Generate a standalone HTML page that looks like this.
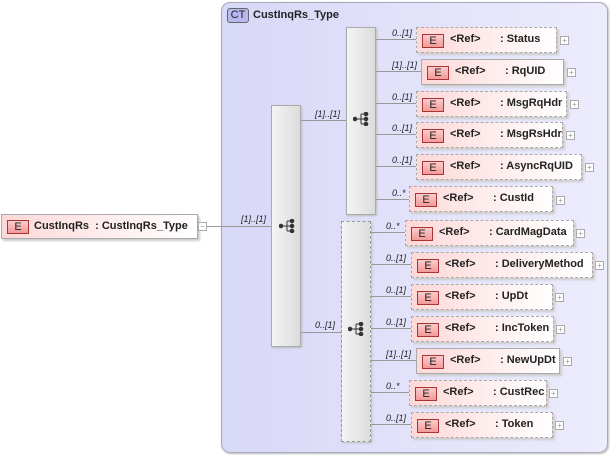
<!DOCTYPE html>
<html><head><meta charset="utf-8"><style>
*{margin:0;padding:0;box-sizing:border-box}
body{width:610px;height:455px;background:#fff;position:relative;overflow:hidden;font-family:"Liberation Sans",Arial,sans-serif;font-size:11px;font-weight:bold;color:#222}
.a{position:absolute}
.ct{left:221px;top:2px;width:387px;height:451px;border:1px solid #a8a8b8;border-radius:9px;background:linear-gradient(90deg,#d8d8f8,#ececfd);box-shadow:1px 1px 2px #bbb}
.ctb{left:227px;top:8px;width:22px;height:15px;border:1px solid #666;border-radius:3px;background:#b8b8f0;font-weight:normal;font-size:11px;text-align:center;line-height:13px;color:#222}
.seq{border:1px solid #aaa;background:linear-gradient(90deg,#f4f4f4,#dcdcdc);box-shadow:1px 1px 2px #bbb}
.seq.d{border:1px dashed #999}
.el{height:26px;border:1px solid #aaa;background:linear-gradient(90deg,#fdd8d8,#fff);box-shadow:2px 2px 2px #ccc}
.el.d{border:1px dashed #aaa}
.eb{position:absolute;left:5px;top:6px;width:22px;height:14px;border:1px solid #a33;background:linear-gradient(#fcc,#f29a9a);font-weight:normal;text-align:center;line-height:12px;font-size:11px;color:#222}
.r{position:absolute;left:33px;top:5px}
.n{position:absolute;left:83px;top:5px;white-space:nowrap}
.pl{width:9px;height:9px;border:1px solid #aaa;background:#fff;font-size:8px;line-height:7px;text-align:center;color:#999;font-weight:normal}
.h{height:1px;background:#999}
.lb{font-style:italic;font-weight:normal;font-size:9px;color:#222}
</style></head><body>
<div class="a el" style="left:1px;top:214px;width:197px;height:25px;border-color:#aaa"><div class="eb" style="top:5px">E</div><div class="r" style="left:32px;top:5px">CustInqRs&nbsp; : CustInqRs_Type</div></div>
<div class="a pl" style="left:198px;top:222px">−</div>
<div class="a h" style="left:207px;top:226px;width:64px"></div>
<div class="a ct"></div>
<div class="a ctb">CT</div>
<div class="a" style="left:253px;top:9px;font-size:11px">CustInqRs_Type</div>
<div class="a h" style="left:221px;top:226px;width:50px"></div>
<div class="a lb" style="left:241px;top:214px">[1]..[1]</div>

<div class="a seq" style="left:271px;top:105px;width:30px;height:242px"></div>
<svg class="a" style="left:279px;top:219px" width="16" height="14"><g fill="#333" stroke="#333"><circle cx="2" cy="7" r="1.8"/><line x1="2" y1="7" x2="8" y2="7"/><line x1="8" y1="2" x2="8" y2="12"/><line x1="8" y1="2" x2="13" y2="2"/><line x1="8" y1="7" x2="13" y2="7"/><line x1="8" y1="12" x2="13" y2="12"/><circle cx="13" cy="2" r="1.8"/><circle cx="13" cy="7" r="1.8"/><circle cx="13" cy="12" r="1.8"/></g></svg>

<div class="a h" style="left:301px;top:120px;width:45px"></div>
<div class="a lb" style="left:315px;top:109px">[1]..[1]</div>
<div class="a h" style="left:301px;top:332px;width:41px"></div>
<div class="a lb" style="left:315px;top:320px">0..[1]</div>

<div class="a seq" style="left:346px;top:27px;width:30px;height:188px"></div>
<svg class="a" style="left:353px;top:112px" width="16" height="14"><g fill="#333" stroke="#333"><circle cx="2" cy="7" r="1.8"/><line x1="2" y1="7" x2="8" y2="7"/><line x1="8" y1="2" x2="8" y2="12"/><line x1="8" y1="2" x2="13" y2="2"/><line x1="8" y1="7" x2="13" y2="7"/><line x1="8" y1="12" x2="13" y2="12"/><circle cx="13" cy="2" r="1.8"/><circle cx="13" cy="7" r="1.8"/><circle cx="13" cy="12" r="1.8"/></g></svg>

<div class="a seq d" style="left:341px;top:221px;width:30px;height:221px"></div>
<svg class="a" style="left:348px;top:322px" width="16" height="14"><g fill="#333" stroke="#333"><circle cx="2" cy="7" r="1.8"/><line x1="2" y1="7" x2="8" y2="7"/><line x1="8" y1="2" x2="8" y2="12"/><line x1="8" y1="2" x2="13" y2="2"/><line x1="8" y1="7" x2="13" y2="7"/><line x1="8" y1="12" x2="13" y2="12"/><circle cx="13" cy="2" r="1.8"/><circle cx="13" cy="7" r="1.8"/><circle cx="13" cy="12" r="1.8"/></g></svg>

<div class="a h" style="left:376px;top:39px;width:40px"></div><div class="a lb" style="left:392px;top:28px">0..[1]</div>
<div class="a el d" style="left:416px;top:27px;width:141px"><div class="eb">E</div><div class="r">&lt;Ref&gt;</div><div class="n">: Status</div></div><div class="a pl" style="left:560px;top:36px">+</div>

<div class="a h" style="left:376px;top:71px;width:45px"></div><div class="a lb" style="left:392px;top:60px">[1]..[1]</div>
<div class="a el" style="left:421px;top:59px;width:143px"><div class="eb">E</div><div class="r">&lt;Ref&gt;</div><div class="n">: RqUID</div></div><div class="a pl" style="left:567px;top:68px">+</div>

<div class="a h" style="left:376px;top:103px;width:40px"></div><div class="a lb" style="left:392px;top:92px">0..[1]</div>
<div class="a el d" style="left:416px;top:91px;width:151px"><div class="eb">E</div><div class="r">&lt;Ref&gt;</div><div class="n">: MsgRqHdr</div></div><div class="a pl" style="left:570px;top:100px">+</div>

<div class="a h" style="left:376px;top:134px;width:40px"></div><div class="a lb" style="left:392px;top:123px">0..[1]</div>
<div class="a el d" style="left:416px;top:122px;width:147px"><div class="eb">E</div><div class="r">&lt;Ref&gt;</div><div class="n">: MsgRsHdr</div></div><div class="a pl" style="left:566px;top:131px">+</div>

<div class="a h" style="left:376px;top:166px;width:40px"></div><div class="a lb" style="left:392px;top:155px">0..[1]</div>
<div class="a el d" style="left:416px;top:154px;width:166px"><div class="eb">E</div><div class="r">&lt;Ref&gt;</div><div class="n">: AsyncRqUID</div></div><div class="a pl" style="left:585px;top:163px">+</div>

<div class="a h" style="left:376px;top:199px;width:33px"></div><div class="a lb" style="left:392px;top:188px">0..*</div>
<div class="a el d" style="left:409px;top:186px;width:144px"><div class="eb">E</div><div class="r">&lt;Ref&gt;</div><div class="n">: CustId</div></div><div class="a pl" style="left:556px;top:196px">+</div>

<div class="a h" style="left:371px;top:232px;width:34px"></div><div class="a lb" style="left:386px;top:221px">0..*</div>
<div class="a el d" style="left:405px;top:220px;width:169px"><div class="eb">E</div><div class="r">&lt;Ref&gt;</div><div class="n">: CardMagData</div></div><div class="a pl" style="left:576px;top:229px">+</div>

<div class="a h" style="left:371px;top:264px;width:40px"></div><div class="a lb" style="left:386px;top:253px">0..[1]</div>
<div class="a el d" style="left:411px;top:252px;width:182px"><div class="eb">E</div><div class="r">&lt;Ref&gt;</div><div class="n">: DeliveryMethod</div></div><div class="a pl" style="left:595px;top:261px">+</div>

<div class="a h" style="left:371px;top:296px;width:40px"></div><div class="a lb" style="left:386px;top:285px">0..[1]</div>
<div class="a el d" style="left:411px;top:284px;width:142px"><div class="eb">E</div><div class="r">&lt;Ref&gt;</div><div class="n">: UpDt</div></div><div class="a pl" style="left:555px;top:293px">+</div>

<div class="a h" style="left:371px;top:328px;width:40px"></div><div class="a lb" style="left:386px;top:317px">0..[1]</div>
<div class="a el d" style="left:411px;top:316px;width:143px"><div class="eb">E</div><div class="r">&lt;Ref&gt;</div><div class="n">: IncToken</div></div><div class="a pl" style="left:556px;top:325px">+</div>

<div class="a h" style="left:371px;top:360px;width:45px"></div><div class="a lb" style="left:386px;top:349px">[1]..[1]</div>
<div class="a el" style="left:416px;top:348px;width:144px"><div class="eb">E</div><div class="r">&lt;Ref&gt;</div><div class="n">: NewUpDt</div></div><div class="a pl" style="left:563px;top:357px">+</div>

<div class="a h" style="left:371px;top:392px;width:38px"></div><div class="a lb" style="left:386px;top:381px">0..*</div>
<div class="a el d" style="left:409px;top:380px;width:138px"><div class="eb">E</div><div class="r">&lt;Ref&gt;</div><div class="n">: CustRec</div></div><div class="a pl" style="left:549px;top:389px">+</div>

<div class="a h" style="left:371px;top:424px;width:40px"></div><div class="a lb" style="left:386px;top:413px">0..[1]</div>
<div class="a el d" style="left:411px;top:412px;width:142px"><div class="eb">E</div><div class="r">&lt;Ref&gt;</div><div class="n">: Token</div></div><div class="a pl" style="left:555px;top:421px">+</div>
</body></html>
